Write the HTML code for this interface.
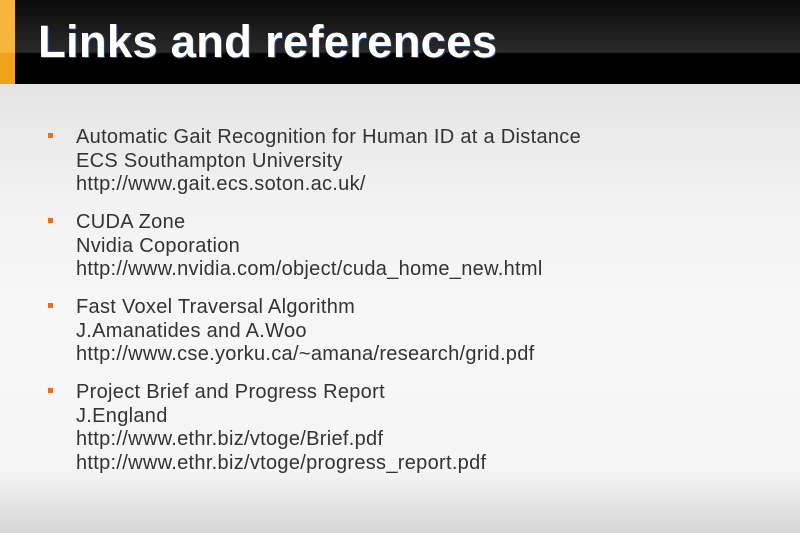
<!DOCTYPE html>
<html><head><style>
body{margin:0;width:800px;height:533px;overflow:hidden;font-family:"Liberation Sans",sans-serif;
background:linear-gradient(#e4e4e4 85px,#f2f2f2 200px,#f6f6f6 300px,#f5f5f5 470px,#d6d6d6 533px);position:relative}
.hd{position:absolute;left:0;top:0;width:800px;height:84px;background:linear-gradient(#0a0a0a 0px,#2a2a2a 52px,#000 54px,#000 84px)}
.or{position:absolute;left:0;top:0;width:15px;height:84px;background:linear-gradient(#f6b53a,#f5b63c 52px,#f0a218 54px,#f0a218)}
h1{position:absolute;left:38px;top:16px;margin:0;font-size:45.5px;font-weight:bold;color:#fff;letter-spacing:0.2px;text-shadow:1px 1px 0 #2a4b8a}
.it{position:absolute;left:76px;font-size:20px;color:#333;line-height:23.5px;letter-spacing:0.3px}
.b{position:absolute;left:48px;width:5px;height:5px;background:#f26a1b}
</style></head><body>
<div class="hd"></div><div class="or"></div>
<h1>Links and references</h1>
<div class="b" style="top:133px"></div>
<div class="it" style="top:126px">Automatic Gait Recognition for Human ID at a Distance<br>ECS Southampton University<br>http://www.gait.ecs.soton.ac.uk/</div>
<div class="b" style="top:218px"></div>
<div class="it" style="top:211px">CUDA Zone<br>Nvidia Coporation<br>http://www.nvidia.com/object/cuda_home_new.html</div>
<div class="b" style="top:303px"></div>
<div class="it" style="top:296px">Fast Voxel Traversal Algorithm<br>J.Amanatides and A.Woo<br>http://www.cse.yorku.ca/~amana/research/grid.pdf</div>
<div class="b" style="top:388px"></div>
<div class="it" style="top:381px">Project Brief and Progress Report<br>J.England<br>http://www.ethr.biz/vtoge/Brief.pdf<br>http://www.ethr.biz/vtoge/progress_report.pdf</div>
</body></html>
